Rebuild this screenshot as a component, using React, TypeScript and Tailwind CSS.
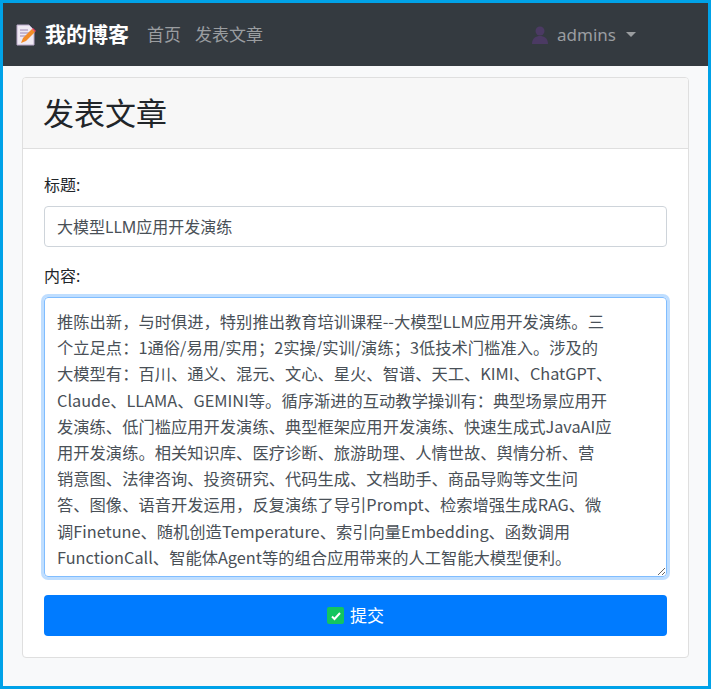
import React from "react";

const text = [
  "推陈出新，与时俱进，特别推出教育培训课程--大模型LLM应用开发演练。三",
  "个立足点：1通俗/易用/实用；2实操/实训/演练；3低技术门槛准入。涉及的",
  "大模型有：百川、通义、混元、文心、星火、智谱、天工、KIMI、ChatGPT、",
  "Claude、LLAMA、GEMINI等。循序渐进的互动教学操训有：典型场景应用开",
  "发演练、低门槛应用开发演练、典型框架应用开发演练、快速生成式JavaAI应",
  "用开发演练。相关知识库、医疗诊断、旅游助理、人情世故、舆情分析、营",
  "销意图、法律咨询、投资研究、代码生成、文档助手、商品导购等文生问",
  "答、图像、语音开发运用，反复演练了导引Prompt、检索增强生成RAG、微",
  "调Finetune、随机创造Temperature、索引向量Embedding、函数调用",
  "FunctionCall、智能体Agent等的组合应用带来的人工智能大模型便利。",
].join("\n");

export default function App() {
  return (
    <div className="w-[711px] h-[689px] border-[3px] border-[#00a2e8] bg-[#f8f9fa] overflow-hidden" style={{ fontFamily: '"Noto Sans", "Noto Sans CJK SC", sans-serif' }}>
      <nav className="h-[63px] bg-[#343a40] flex items-center pl-[12px] pr-[72px]">
        <svg width="22" height="24" viewBox="0 0 22 24" className="mr-[8px]">
          <path d="M2 2h12l5 5v15H2z" fill="#efe9f3" stroke="#b9a9c9" />
          <path d="M5 7h8M5 10h9M5 13h6" stroke="#9a86b0" strokeWidth="1" />
          <path d="M6 20l2-5 9-9 3 3-9 9z" fill="#f28c28" />
          <path d="M17 6l3 3 1-1-3-3z" fill="#e83e5c" />
        </svg>
        <span className="text-white text-[21px] font-bold mr-[18px]">我的博客</span>
        <span className="text-[#9a9da0] text-[17px] mr-[14px]">首页</span>
        <span className="text-[#9a9da0] text-[17px]">发表文章</span>
        <div className="flex-1" />
        <svg width="16" height="18" viewBox="0 0 16 18" className="mr-[9px]"><circle cx="8" cy="5" r="4.5" fill="#4b3a63" /><path d="M0 18c0-6 4-8 8-8s8 2 8 8z" fill="#4b3a63" /></svg>
        <span className="text-[#9a9da0] text-[17px]">admins</span>
        <span className="ml-[10px] w-0 h-0 border-l-[5px] border-r-[5px] border-t-[5px] border-l-transparent border-r-transparent border-t-[#9a9da0]" />
      </nav>
      <div className="px-[19px] pt-[11px]">
        <div className="bg-white border border-[#dfdfdf] rounded-[4px] overflow-hidden">
          <div className="h-[71px] bg-[#f7f7f7] border-b border-[#dfdfdf] flex items-center px-[20px]">
            <h1 className="text-[31px] text-[#212529]">发表文章</h1>
          </div>
          <div className="px-[21px] pt-[24px] pb-[21px]">
            <div className="text-[16px] text-[#212529] mb-[9px]">标题:</div>
            <div className="h-[41px] border border-[#ced4da] rounded-[4px] flex items-center px-[12px] text-[16px] text-[#495057]">大模型LLM应用开发演练</div>
            <div className="text-[16px] text-[#212529] mt-[17px] mb-[9px]">内容:</div>
            <textarea
              readOnly
              value={text}
              className="block w-full h-[280px] border border-[#80bdff] rounded-[4px] shadow-[0_0_0_3px_rgba(0,123,255,0.25)] px-[12px] pt-[10px] text-[16.3px] leading-[26.2px] text-[#495057] outline-none whitespace-pre overflow-hidden"
              style={{ fontFamily: '"Noto Sans CJK SC", sans-serif' }}
            />
            <button className="mt-[18px] w-full h-[41px] bg-[#007bff] rounded-[4px] text-white text-[17px] flex items-center justify-center gap-[6px]">
              <span className="w-[17px] h-[17px] rounded-[2px] bg-[#13c55f] flex items-center justify-center">
                <svg width="12" height="12" viewBox="0 0 12 12"><path d="M2 6.5l2.5 2.5L10 3" stroke="white" strokeWidth="2" fill="none" /></svg>
              </span>
              提交
            </button>
          </div>
        </div>
      </div>
    </div>
  );
}
